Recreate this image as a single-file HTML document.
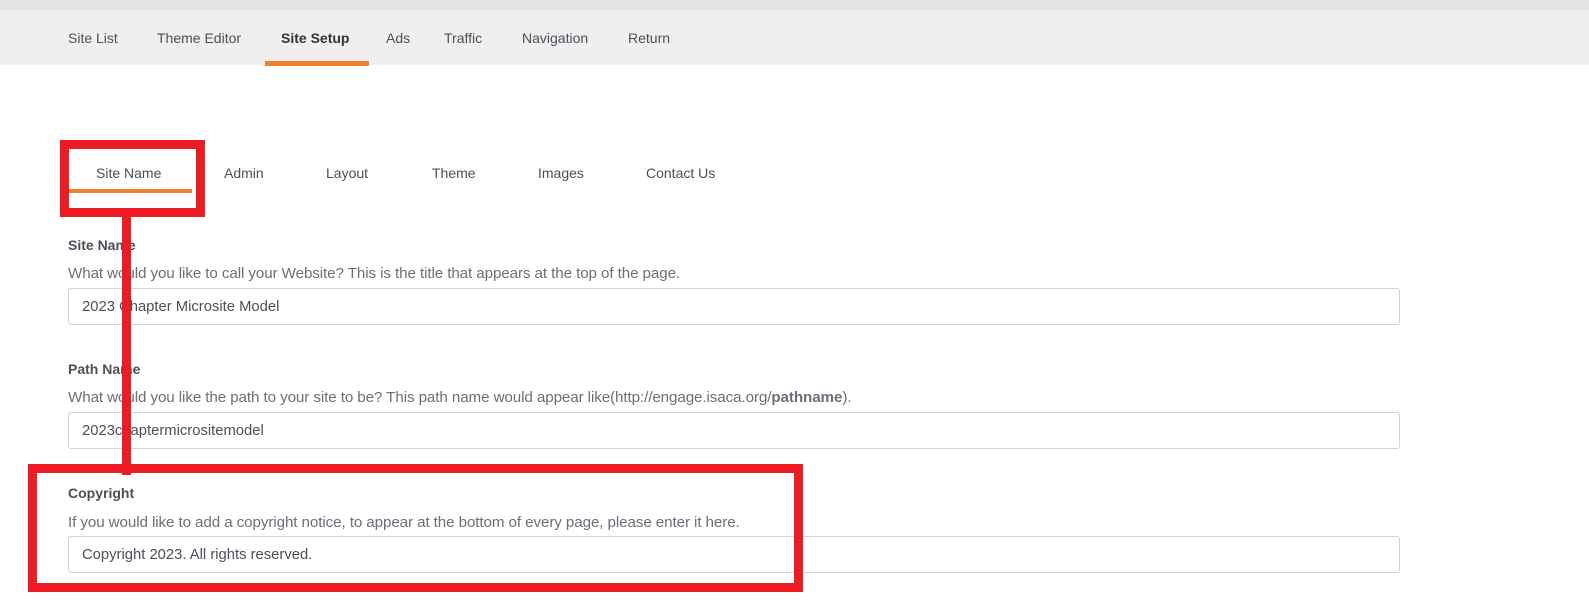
<!DOCTYPE html>
<html><head><style>
*{margin:0;padding:0;box-sizing:border-box}
body{width:1589px;height:612px;background:#fff;font-family:"Liberation Sans",sans-serif;color:#555a66;position:relative;overflow:hidden}
.top{position:absolute;left:0;top:0;width:1589px;height:10px;background:#e4e4e4}
.nav{position:absolute;left:0;top:10px;width:1589px;height:55px;background:#efefef}
.nav span{position:absolute;top:20px;font-size:14px;color:#4a4f5a}
.ul{position:absolute;background:#f0812a}
.sub span{position:absolute;top:165px;font-size:14px;color:#4a4f5a}
.lab{position:absolute;left:68px;font-size:14px;font-weight:bold;color:#4a4f5a}
.desc{position:absolute;left:68px;font-size:15.2px;color:#6a6f7a;letter-spacing:-0.1px}
.inp{position:absolute;left:68px;width:1332px;height:37px;border:1px solid #cfd2d6;border-radius:3px;font-size:14.8px;padding:10px 13px;color:#4a4f5a}
.red{position:absolute;border:9px solid #ed1c24}
</style></head><body>
<div class="top"></div>
<div class="nav">
<span style="left:68px">Site List</span>
<span style="left:157px">Theme Editor</span>
<span style="left:281px;font-weight:bold;color:#333">Site Setup</span>
<span style="left:386px">Ads</span>
<span style="left:444px">Traffic</span>
<span style="left:522px">Navigation</span>
<span style="left:628px">Return</span>
</div>
<div class="ul" style="left:265px;top:61px;width:104px;height:5px"></div>
<div class="sub">
<span style="left:96px">Site Name</span>
<span style="left:224px">Admin</span>
<span style="left:326px">Layout</span>
<span style="left:432px">Theme</span>
<span style="left:538px">Images</span>
<span style="left:646px">Contact Us</span>
</div>
<div class="ul" style="left:69px;top:189px;width:123px;height:4px"></div>
<div class="lab" style="top:237px">Site Name</div>
<div class="desc" style="top:265px">What would you like to call your Website? This is the title that appears at the top of the page.</div>
<div class="inp" style="top:288px">2023 Chapter Microsite Model</div>
<div class="lab" style="top:361px">Path Name</div>
<div class="desc" style="top:389px">What would you like the path to your site to be? This path name would appear like(http://engage.isaca.org/<b>pathname</b>).</div>
<div class="inp" style="top:412px">2023chaptermicrositemodel</div>
<div class="lab" style="top:485px">Copyright</div>
<div class="desc" style="top:514px">If you would like to add a copyright notice, to appear at the bottom of every page, please enter it here.</div>
<div class="inp" style="top:536px">Copyright 2023. All rights reserved.</div>
<div class="red" style="left:60px;top:140px;width:145px;height:77px"></div>
<div class="red" style="left:28px;top:464px;width:775px;height:128px"></div>
<div style="position:absolute;left:122px;top:210px;width:9px;height:265px;background:#ed1c24"></div>
</body></html>
